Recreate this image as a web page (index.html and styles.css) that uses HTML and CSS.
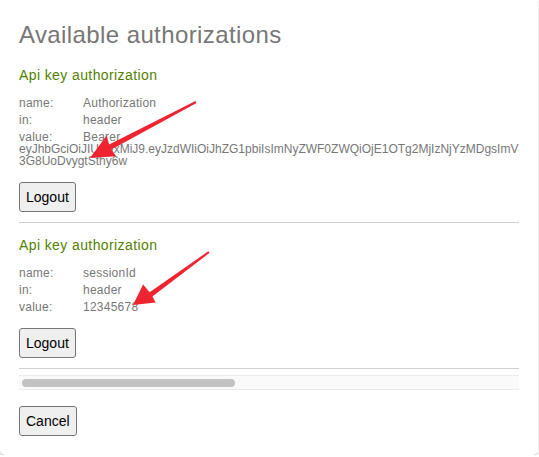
FILE: index.html
```html
<!DOCTYPE html>
<html lang="en">
<head>
<meta charset="utf-8">
<title>Available authorizations</title>
<link rel="stylesheet" href="styles.css">
</head>
<body>
<div class="card">
  <h2 class="title">Available authorizations</h2>
  <div class="scroll">
    <section class="auth">
      <h3 class="auth-title">Api key authorization</h3>
      <div class="row"><span class="label">name:</span>Authorization</div>
      <div class="row"><span class="label">in:</span>header</div>
      <div class="row"><span class="label">value:</span>Bearer<br><span class="token">eyJhbGciOiJIUzUxMiJ9.eyJzdWIiOiJhZG1pbiIsImNyZWF0ZWQiOjE1OTg2MjIzNjYzMDgsImV4cCI6MTU5OTIyNzE2Nn0.kQ2f8Xc7Lr0aTzYbWnE5pVd1HsJqGm4OuRiK9eZy_NxBwFtSlCvAoPjUh6MgIDr2-<br>3G8UoDvygtSthy6w</span></div>
      <button class="btn" type="button">Logout</button>
    </section>
    <section class="auth">
      <h3 class="auth-title">Api key authorization</h3>
      <div class="row"><span class="label">name:</span>sessionId</div>
      <div class="row"><span class="label">in:</span>header</div>
      <div class="row"><span class="label">value:</span>12345678</div>
      <button class="btn" type="button">Logout</button>
    </section>
  </div>
  <div class="hscroll"><div class="thumb"></div></div>
  <button class="btn" type="button">Cancel</button>
  <svg class="marks" width="539" height="457" viewBox="0 0 539 457" aria-hidden="true">
    <polygon fill="#ee2531" points="196.5,102.9 111.4,149.6 116.1,156.2 90,158 106.6,135.5 109.1,144.6 195.5,101.1"/>
    <polygon fill="#ee2531" points="209.6,252.8 152.4,296.6 155.7,302.6 133,305 143.1,284.6 149.6,292.3 208.4,251.2"/>
  </svg>
</div>
</body>
</html>
```
FILE: styles.css
```css
html, body {
  margin: 0;
  padding: 0;
  background: #ffffff;
}

body {
  font-family: "Liberation Sans", Arial, sans-serif;
}

.card {
  position: relative;
  width: 538px;
  height: 455px;
  box-sizing: border-box;
  padding: 21px 19px 0 19px;
  background: #ffffff;
  border-radius: 0 0 5px 5px;
  box-shadow: 0 1px 2px rgba(0, 0, 0, 0.28);
}

.title {
  margin: 0 0 4px 0;
  font-size: 24px;
  line-height: 28px;
  font-weight: normal;
  letter-spacing: 0.4px;
  color: #777777;
}

.scroll {
  overflow: hidden;
}

.auth {
  padding: 14px 0 10px 0;
  border-bottom: 1px solid #cfcfcf;
}

.auth-title {
  margin: 0 0 14px 0;
  font-size: 14px;
  line-height: 16px;
  font-weight: normal;
  letter-spacing: 0.4px;
  color: #547f00;
}

.row {
  font-size: 12px;
  line-height: 12px;
  letter-spacing: 0.25px;
  color: #777777;
  white-space: nowrap;
  margin-bottom: 5px;
}

.row:last-of-type {
  margin-bottom: 15px;
}

.token {
  letter-spacing: 0;
}

.label {
  display: inline-block;
  width: 64px;
}

.btn {
  display: block;
  height: 30px;
  padding: 0 6px;
  font-family: "Liberation Sans", Arial, sans-serif;
  font-size: 14px;
  color: #000000;
  background: #efefef;
  border: 1px solid #767676;
  border-radius: 3px;
}

.hscroll {
  margin: 6px 0 16px 0;
  height: 15px;
  box-sizing: border-box;
  padding: 3px 3px 0 3px;
  background: #fafafa;
  border-top: 1px solid #ebebeb;
  border-bottom: 1px solid #ebebeb;
}

.thumb {
  width: 213px;
  height: 8px;
  border-radius: 4px;
  background: #c2c2c2;
}

.marks {
  position: absolute;
  left: 0;
  top: 0;
  pointer-events: none;
}
```
